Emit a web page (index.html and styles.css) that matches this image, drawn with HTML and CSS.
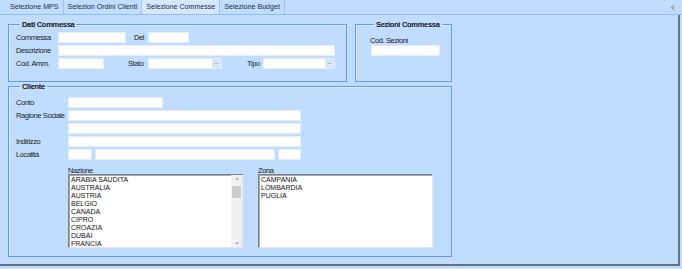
FILE: index.html
```html
<!DOCTYPE html>
<html lang="it">
<head>
<meta charset="utf-8">
<title>Selezione Commesse</title>
<link rel="stylesheet" href="styles.css">
</head>
<body>
<div class="tabs">
  <div class="tab">Selezione MPS</div>
  <div class="tab">Selezion Ordini Clienti</div>
  <div class="tab active">Selezione Commesse</div>
  <div class="tab">Selezione Budget</div>
  <div class="tabs-arrow">
    <svg width="5" height="7" viewBox="0 0 5 7"><path d="M3.5 0.5 L0.5 3.5 L3.5 6.5 Z" fill="#9aa3ad"/><path d="M4.5 0 V7" stroke="#b9c1ca" stroke-width="1"/></svg>
  </div>
</div>
<div class="panel">
  <div class="top-row">
    <fieldset class="group dati">
      <legend>Dati Commessa</legend>
      <div class="row">
        <span class="lbl l42">Commessa</span>
        <span class="input w68"></span>
        <span class="lbl l14 ml8">Del</span>
        <span class="input w41"></span>
      </div>
      <div class="row">
        <span class="lbl l42">Descrizione</span>
        <span class="input w277"></span>
      </div>
      <div class="row">
        <span class="lbl l42">Cod. Amm.</span>
        <span class="input w46"></span>
        <span class="lbl l20 ml24">Stato</span>
        <span class="input combo w74"><span class="drop">&#8211;</span></span>
        <span class="lbl l16 ml25">Tipo</span>
        <span class="input combo w72"><span class="drop">&#8211;</span></span>
      </div>
    </fieldset>
    <fieldset class="group sez">
      <legend>Sezioni Commessa</legend>
      <div class="sez-lbl">Cod. Sezioni</div>
      <span class="input w69"></span>
    </fieldset>
  </div>
  <fieldset class="group cliente">
    <legend>Cliente</legend>
    <div class="row">
      <span class="lbl l52">Conto</span>
      <span class="input w95"></span>
    </div>
    <div class="row">
      <span class="lbl l52">Ragione Sociale</span>
      <span class="input w233"></span>
    </div>
    <div class="row">
      <span class="lbl l52"></span>
      <span class="input w233"></span>
    </div>
    <div class="row">
      <span class="lbl l52">Indirizzo</span>
      <span class="input w233"></span>
    </div>
    <div class="row">
      <span class="lbl l52">Località</span>
      <span class="input w24"></span>
      <span class="input w180 ml3"></span>
      <span class="input w23 ml3"></span>
    </div>
    <div class="lists">
      <div class="listcol">
        <div class="list-lbl">Nazione</div>
        <div class="listbox">
          <ul class="items">
            <li>ARABIA SAUDITA</li>
            <li>AUSTRALIA</li>
            <li>AUSTRIA</li>
            <li>BELGIO</li>
            <li>CANADA</li>
            <li>CIPRO</li>
            <li>CROAZIA</li>
            <li>DUBAI</li>
            <li>FRANCIA</li>
          </ul>
          <div class="scrollbar">
            <span class="arrow">&#8963;</span>
            <span class="thumb"></span>
            <span class="track"></span>
            <span class="arrow">&#8964;</span>
          </div>
        </div>
      </div>
      <div class="listcol">
        <div class="list-lbl">Zona</div>
        <div class="listbox">
          <ul class="items">
            <li>CAMPANIA</li>
            <li>LOMBARDIA</li>
            <li>PUGLIA</li>
          </ul>
        </div>
      </div>
    </div>
  </fieldset>
</div>
</body>
</html>
```
FILE: styles.css
```css
* { box-sizing: border-box; }
html, body { margin: 0; padding: 0; }
body {
  width: 682px;
  height: 269px;
  background: #c0dcfe;
  font-family: "Liberation Sans", Arial, sans-serif;
  font-size: 7.5px;
  letter-spacing: -0.4px;
  color: #1c1c1c;
  overflow: hidden;
}

.tabs {
  display: flex;
  height: 15px;
  border-bottom: 1px solid #94bdee;
  padding-left: 6px;
  font-size: 7.1px;
  letter-spacing: 0;
  color: #1e2c44;
}
.tab {
  padding: 0 4px 0 4px;
  line-height: 14px;
  border-right: 1px solid #9fc0e8;
  white-space: nowrap;
}
.tab.active {
  background: #d5e7fd;
  border-left: 1px solid #a9c8ee;
  margin-left: -1px;
}
.tabs-arrow {
  margin-left: auto;
  padding: 4px 7px 0 0;
  line-height: 0;
}

.panel {
  width: 680px;
  height: 251px;
  border-right: 2px solid #68717c;
  border-bottom: 2px solid #68717c;
  padding: 5px 0 0 8px;
}

.top-row {
  display: flex;
  gap: 8px;
}

fieldset.group {
  margin: 0;
  border: 1px solid #5d9cef;
  box-shadow: inset 1px 1px 0 #d8e8fd;
  min-width: 0;
}
fieldset.group legend {
  font-weight: bold;
  padding: 0 2px;
  margin-left: 4px;
  line-height: 9px;
  color: #111;
  white-space: nowrap;
  letter-spacing: -0.3px;
}

.dati {
  width: 339px;
  height: 62px;
  padding: 3px 0 0 7px;
}
.sez {
  width: 97px;
  height: 62px;
  padding: 7px 0 0 14px;
}
.sez-lbl {
  line-height: 9px;
}
.sez .input { display: block; margin-left: 1px; height: 11px; }

.cliente {
  width: 444px;
  height: 175px;
  margin-top: 5px;
  padding: 6px 0 0 7px;
}

.row {
  display: flex;
  align-items: center;
  height: 11px;
  margin-bottom: 2px;
}
.lbl {
  display: inline-block;
  white-space: nowrap;
  line-height: 11px;
}
.l14 { width: 14px; }
.l16 { width: 16px; }
.l20 { width: 20px; }
.l42 { width: 42px; }
.l52 { width: 52px; }
.ml3 { margin-left: 3px; }
.ml8 { margin-left: 8px; }
.ml24 { margin-left: 24px; }
.ml25 { margin-left: 25px; }

.input {
  display: inline-block;
  height: 11px;
  background: #fff;
  border: 1px solid #e2ecfa;
}
.w23 { width: 23px; }
.w24 { width: 24px; }
.w41 { width: 41px; }
.w46 { width: 46px; }
.w68 { width: 68px; }
.w69 { width: 69px; }
.w72 { width: 72px; }
.w74 { width: 74px; }
.w95 { width: 95px; }
.w180 { width: 180px; }
.w233 { width: 233px; }
.w277 { width: 277px; }

.combo { display: inline-flex; justify-content: flex-end; }
.drop {
  width: 9px;
  height: 9px;
  background: #dbe7f5;
  color: #6a7280;
  font-size: 6px;
  line-height: 9px;
  text-align: center;
  letter-spacing: 0;
}

.lists {
  display: flex;
  gap: 15px;
  margin-top: 7px;
  padding-left: 52px;
}
.listcol { width: 175px; }
.list-lbl {
  line-height: 7px;
  height: 7px;
}
.listbox {
  display: flex;
  height: 74px;
  background: #fff;
  border: 1px solid;
  border-color: #7c7f85 #e6e6e6 #e6e6e6 #7c7f85;
  box-shadow: inset 1px 1px 0 #a9a9a9;
}
.items {
  flex: 1;
  list-style: none;
  margin: 0;
  padding: 1px 0 0 2px;
  font-size: 7px;
  line-height: 8px;
  letter-spacing: 0;
  color: #111;
}
.scrollbar {
  width: 11px;
  display: flex;
  flex-direction: column;
  background: #f0f0f0;
}
.arrow {
  height: 11px;
  font-size: 7px;
  line-height: 11px;
  text-align: center;
  color: #606060;
}
.thumb {
  height: 12px;
  margin: 0 1px;
  background: #cdcdcd;
}
.track { flex: 1; }
```
